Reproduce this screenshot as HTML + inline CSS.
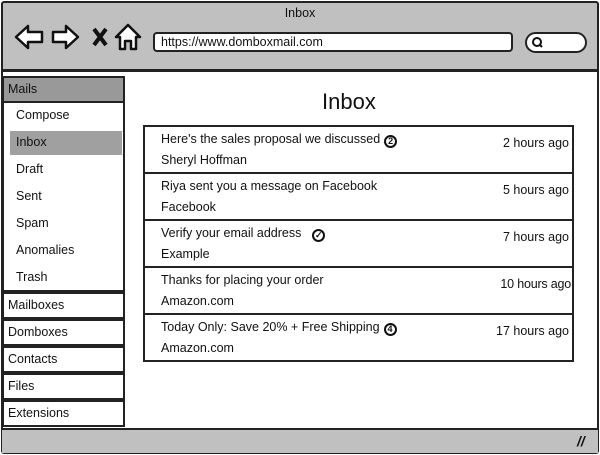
<!DOCTYPE html>
<html><head><style>
*{margin:0;padding:0;box-sizing:border-box}
body{width:600px;height:455px;background:#fff;font-family:"Liberation Sans",sans-serif;font-size:12.5px;color:#111;position:relative;overflow:hidden}
.a{position:absolute}
.frame{left:1px;top:1px;width:598px;height:453px;border:2px solid #222;border-radius:3px}
.top{left:2px;top:2px;width:596px;height:70px;background:#c0c0c0;border-bottom:3px solid #222}
.bot{left:2px;top:428px;width:596px;height:25px;background:#c0c0c0;border-top:2px solid #222}
.url{left:153px;top:32px;width:360px;height:20px;background:#fff;border:2px solid #222;border-radius:4px;padding:0 6px;line-height:16px;font-size:12.5px}
.srch{left:525px;top:32px;width:62px;height:21px;background:#fff;border:2px solid #222;border-radius:11px}
.side{left:2px;width:123px;border:2px solid #222;padding-left:4px;height:27px;line-height:23px}
.sub{left:16px;line-height:27px}
.list{left:143px;top:125px;width:431px;height:237px;border:2px solid #222}
.row{position:absolute;left:0;width:427px;height:47px;border-bottom:2px solid #222}
.row .t{position:absolute;left:16px;top:5px}
.row .s{position:absolute;left:16px;top:26px}
.row .h{position:absolute;right:3px;top:9px}
.ic{display:inline-block;width:13px;height:13px;border:2px solid #111;border-radius:50%;font-size:9px;line-height:9px;text-align:center;font-weight:bold;vertical-align:-1px;margin-left:4px}
</style></head><body>
<div class="a top"></div>
<div class="a frame"></div>
<div class="a" style="left:0;width:600px;top:6px;text-align:center">Inbox</div>
<svg class="a" style="left:12px;top:22px" width="135" height="30" viewBox="0 0 135 30">
<g fill="#fff" stroke="#111" stroke-width="2.5" stroke-linejoin="round">
<path d="M4 15 L16 4 L16 10 L30 10 L30 20 L16 20 L16 26 Z"/>
<path d="M66 15 L54 4 L54 10 L41 10 L41 20 L54 20 L54 26 Z"/>
<path d="M104 15 L116 3 L128 15 L124 15 L124 27 L119 27 L119 19 L113 19 L113 27 L108 27 L108 15 Z"/>
</g>
<path d="M82 7 L94 23 M94 7 L82 23" stroke="#111" stroke-width="4"/>
</svg>
<div class="a url">https://www.domboxmail.com</div>
<div class="a srch"><svg width="20" height="17"><circle cx="10" cy="8" r="4" fill="none" stroke="#111" stroke-width="2"/><path d="M13 11 L15 13" stroke="#111" stroke-width="2"/></svg></div>
<div class="a" style="left:2px;top:102px;width:123px;height:190px;border:2px solid #222;border-top:none"></div>
<div class="a side" style="top:76px;background:#999;">Mails</div>
<div class="a" style="left:10px;top:131px;width:112px;height:24px;background:#a0a0a0"></div>
<div class="a sub" style="top:102px">Compose</div>
<div class="a sub" style="top:129px">Inbox</div>
<div class="a sub" style="top:156px">Draft</div>
<div class="a sub" style="top:183px">Sent</div>
<div class="a sub" style="top:210px">Spam</div>
<div class="a sub" style="top:237px">Anomalies</div>
<div class="a sub" style="top:264px">Trash</div>
<div class="a side" style="top:292px">Mailboxes</div>
<div class="a side" style="top:319px">Domboxes</div>
<div class="a side" style="top:346px">Contacts</div>
<div class="a side" style="top:373px">Files</div>
<div class="a side" style="top:400px">Extensions</div>
<div class="a" style="left:322px;top:89px;font-size:22px">Inbox</div>
<div class="a list">
<div class="row" style="top:0"><span class="t">Here's the sales proposal we discussed<span class="ic">2</span></span><span class="s">Sheryl Hoffman</span><span class="h">2 hours ago</span></div>
<div class="row" style="top:47px"><span class="t">Riya sent you a message on Facebook</span><span class="s">Facebook</span><span class="h">5 hours ago</span></div>
<div class="row" style="top:94px"><span class="t">Verify your email address &nbsp;<span class="ic">✓</span></span><span class="s">Example</span><span class="h">7 hours ago</span></div>
<div class="row" style="top:141px"><span class="t">Thanks for placing your order</span><span class="s">Amazon.com</span><span class="h" style="right:1px;letter-spacing:-0.2px">10 hours ago</span></div>
<div class="row" style="top:188px;border:none"><span class="t">Today Only: Save 20% + Free Shipping<span class="ic">4</span></span><span class="s">Amazon.com</span><span class="h">17 hours ago</span></div>
</div>
<div class="a bot"></div>
<div class="a" style="left:577px;top:433px;font-size:14px;font-weight:bold;font-style:italic">//</div>
</body></html>
